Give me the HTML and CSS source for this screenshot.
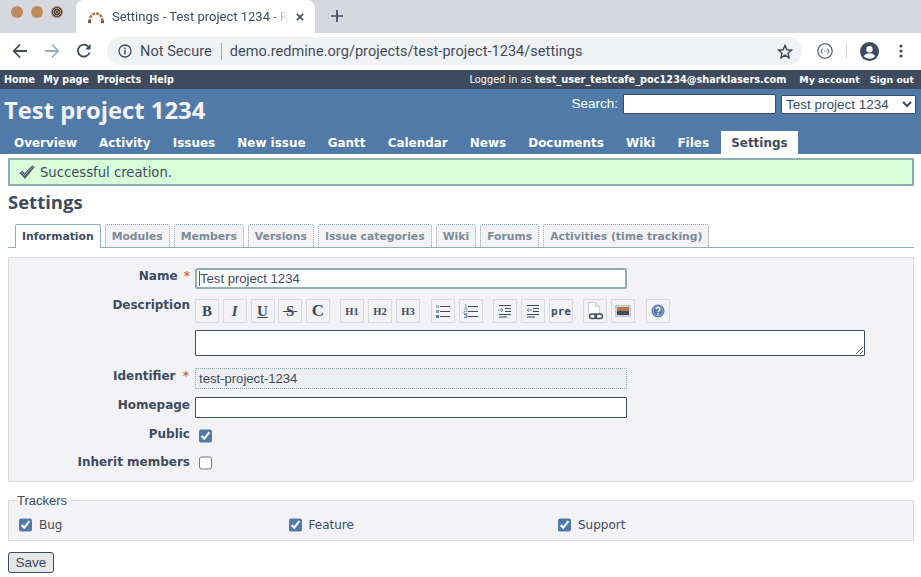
FILE: index.html
```html
<!DOCTYPE html>
<html>
<head>
<title>Settings - Test project 1234 - Redmine</title>
<link rel="stylesheet" href="styles.css">
</head>
<body>
<div class="tabstrip">
  <div class="lights">
    <span class="light"></span>
    <span class="light"></span>
    <span class="light dark"></span>
  </div>
  <div class="browser-tab">
    <svg class="favicon" width="18" height="12" viewBox="0 0 18 12">
      <path d="M2.5 11 C2.5 6 5 2.5 9 2.5 C13 2.5 15.5 6 15.5 11" fill="none" stroke="#b5794a" stroke-width="2.6" stroke-dasharray="3 1"/>
      <path d="M1 9.5h3v2.5h-3zM14 9.5h3v2.5h-3z" fill="#6b5a4e"/>
    </svg>
    <span class="browser-tab-title">Settings - Test project 1234 - R</span>
    <svg class="tab-close" width="10" height="10" viewBox="0 0 10 10"><path d="M1 1l8 8M9 1l-8 8" stroke="#3e4b5e" stroke-width="2"/></svg>
  </div>
  <svg class="new-tab" width="14" height="14" viewBox="0 0 14 14"><path d="M7 1v12M1 7h12" stroke="#3e4b5e" stroke-width="1.7"/></svg>
</div>

<div class="toolbar">
  <svg class="nav-icon" width="16" height="16" viewBox="0 0 16 16"><path d="M15 8H2M8 1.5L1.8 8 8 14.5" fill="none" stroke="#3e4b5e" stroke-width="1.8"/></svg>
  <svg class="nav-icon" width="16" height="16" viewBox="0 0 16 16"><path d="M1 8h13M8 1.5L14.2 8 8 14.5" fill="none" stroke="#94b0b4" stroke-width="1.8"/></svg>
  <svg class="nav-icon" width="16" height="16" viewBox="0 0 16 16"><path d="M13.6 9.5A6 6 0 1 1 12.4 3.6" fill="none" stroke="#3e4b5e" stroke-width="1.8"/><path d="M14.6 1v5.4H9.2z" fill="#3e4b5e"/></svg>
  <div class="omnibox">
    <svg width="14" height="14" viewBox="0 0 14 14"><circle cx="7" cy="7" r="6" fill="none" stroke="#3e4b5e" stroke-width="1.3"/><path d="M7 6v4.4M7 3.4v1.5" stroke="#3e4b5e" stroke-width="1.5"/></svg>
    <span class="not-secure">Not Secure</span>
    <span class="omni-sep"></span>
    <span class="url">demo.redmine.org/projects/test-project-1234/settings</span>
    <svg class="star" width="16" height="15" viewBox="0 0 16 15"><path d="M8 1.5l1.900 4.200 4.600.5-3.400 3.100.9 4.500L8 11.100l-4 2.700.9-4.500L1.500 6.200l4.600-.5z" fill="none" stroke="#3e4b5e" stroke-width="1.500"/></svg>
  </div>
  <svg class="ext" width="16" height="16" viewBox="0 0 16 16"><circle cx="8" cy="8" r="7.200" fill="none" stroke="#3e4b5e" stroke-width="1.100"/><path d="M5.500 5.500L4 8l1.500 2.500M10.500 5.500L12 8l-1.500 2.500" fill="none" stroke="#3e4b5e"/><path d="M7 8h.8M8.800 8h.6" stroke="#3e4b5e"/></svg>
  <span class="tool-sep"></span>
  <svg class="avatar" width="19" height="19" viewBox="0 0 19 19"><circle cx="9.500" cy="9.500" r="9.500" fill="#3e4b5e"/><circle cx="9.500" cy="7.200" r="3.200" fill="#fff"/><path d="M3.800 14.200c1.200-2.200 3.400-3 5.700-3s4.500.8 5.700 3c-1.400 1.600-3.400 2.500-5.700 2.500s-4.300-.9-5.700-2.500z" fill="#fff"/></svg>
  <svg class="dots" width="4" height="14" viewBox="0 0 4 14"><circle cx="2" cy="2" r="1.600" fill="#3e4b5e"/><circle cx="2" cy="7" r="1.600" fill="#3e4b5e"/><circle cx="2" cy="12" r="1.600" fill="#3e4b5e"/></svg>
</div>

<div class="top-menu">
  <ul class="top-links">
    <li>Home</li><li>My page</li><li>Projects</li><li>Help</li>
  </ul>
  <div class="account">Logged in as <b>test_user_testcafe_poc1234@sharklasers.com</b></div>
  <ul class="top-links right">
    <li>My account</li><li>Sign out</li>
  </ul>
</div>

<div class="header">
  <div class="header-row">
    <h1>Test project 1234</h1>
    <div class="quick-search">
      <label>Search:</label>
      <input class="search-input" type="text">
      <select class="jump"><option>Test project 1234</option></select>
    </div>
  </div>
  <ul class="main-menu">
    <li>Overview</li><li>Activity</li><li>Issues</li><li>New issue</li><li>Gantt</li><li>Calendar</li><li>News</li><li>Documents</li><li>Wiki</li><li>Files</li><li class="selected">Settings</li>
  </ul>
</div>

<div class="content">
  <div class="flash">
    <svg width="16" height="14" viewBox="0 0 16 14"><path d="M.8 8l2.600-2 2.200 2.700L13 .8l2.200 1.400L6 13.400z" fill="#4d5a6a" stroke="#3e4b5e" stroke-width=".6"/><path d="M3 7.500l2.500 3L13.500 2" fill="none" stroke="#c4cacf" stroke-width=".8"/></svg>
    <span>Successful creation.</span>
  </div>
  <h2>Settings</h2>
  <ul class="tabs">
    <li class="selected">Information</li><li>Modules</li><li>Members</li><li>Versions</li><li>Issue categories</li><li>Wiki</li><li>Forums</li><li>Activities (time tracking)</li>
  </ul>

  <div class="box">
    <div class="row row-name">
      <label>Name <i>*</i></label>
      <div class="field-wrap">
        <input class="field focused" type="text" value="Test project 1234">
        <span class="caret"></span>
      </div>
    </div>
    <div class="row row-desc">
      <label>Description</label>
      <div class="desc">
        <div class="wiki-toolbar">
          <div class="tb-group first">
            <span class="tb serif"><b>B</b></span>
            <span class="tb serif"><b><em>I</em></b></span>
            <span class="tb serif under"><b>U</b></span>
            <span class="tb serif strike"><b>&#8201;S&#8201;</b></span>
            <span class="tb serif big"><b>C</b></span>
          </div>
          <div class="tb-group">
            <span class="tb serif small"><b>H1</b></span>
            <span class="tb serif small"><b>H2</b></span>
            <span class="tb serif small"><b>H3</b></span>
          </div>
          <div class="tb-group wide">
            <span class="tb">
              <svg width="16" height="14" viewBox="0 0 16 14"><path d="M5 2.500h10M5 7.500h10M5 12.500h10" stroke="#3e4b5e"/><rect x="1" y="1" width="3" height="3" fill="#a9bcc2"/><rect x="1" y="6" width="3" height="3" fill="#8a9aa5"/><rect x="1" y="11" width="3" height="3" fill="#507aaa"/></svg>
            </span>
            <span class="tb">
              <svg width="16" height="14" viewBox="0 0 16 14"><path d="M5 2.500h10M5 7.500h10M5 12.500h10" stroke="#3e4b5e"/><path d="M2 .5h1v3.500M1 4h3" fill="none" stroke="#8fb0b0"/><path d="M1 5.500h3v2H1v2h3" fill="none" stroke="#8a9aa5" stroke-width=".9"/><path d="M1 10.500h3v3H1M2 12h2" fill="none" stroke="#507aaa" stroke-width=".9"/></svg>
            </span>
          </div>
          <div class="tb-group">
            <span class="tb">
              <svg width="14" height="14" viewBox="0 0 14 14"><path d="M1 1.500h12M7 4.500h6M7 7.500h6M1 10.500h12M1 13h8" stroke="#3e4b5e" stroke-width="1.200"/><path d="M0 6h4M3 4l2 2-2 2" fill="none" stroke="#6d9aa0"/></svg>
            </span>
            <span class="tb">
              <svg width="14" height="14" viewBox="0 0 14 14"><path d="M1 1.500h12M7 4.500h6M7 7.500h6M1 10.500h12M1 13h8" stroke="#3e4b5e" stroke-width="1.200"/><path d="M6 6H2M3 4L1 6l2 2" fill="none" stroke="#6d9aa0"/></svg>
            </span>
            <span class="tb pre">pre</span>
          </div>
          <div class="tb-group">
            <span class="tb">
              <svg width="18" height="18" viewBox="0 0 18 18"><path d="M2.500.5h7l4 4v8h-11z" fill="#fff" stroke="#c9ccd3"/><path d="M9.500.5v4h4" fill="#e2e4e8" stroke="#c9ccd3"/><rect x="3.500" y="12" width="7" height="4.500" rx="2.200" fill="none" stroke="#3e4b5e" stroke-width="1.400"/><rect x="9" y="12" width="7.500" height="4.500" rx="2.200" fill="none" stroke="#3e4b5e" stroke-width="1.400"/></svg>
            </span>
            <span class="tb">
              <svg width="16" height="12" viewBox="0 0 16 12"><rect x=".5" y=".5" width="15" height="11" fill="#cfd3d8" stroke="#a9b4bb" stroke-dasharray="1.500 1"/><rect x="2" y="2" width="12" height="4" fill="#b5794a"/><rect x="2" y="6" width="12" height="4" fill="#3e4b5e"/></svg>
            </span>
          </div>
          <div class="tb-group wide">
            <span class="tb">
              <svg width="14" height="14" viewBox="0 0 14 14"><circle cx="7" cy="7" r="6.500" fill="#507aaa"/><circle cx="7" cy="7" r="4.800" fill="none" stroke="#9db5cf"/><path d="M5 5.400c.2-1.200 1-1.700 2-1.700 1.200 0 2 .7 2 1.700 0 1.300-2 1.300-2 2.800" fill="none" stroke="#fff" stroke-width="1.300"/><rect x="6.300" y="9.300" width="1.400" height="1.400" fill="#fff"/></svg>
            </span>
          </div>
        </div>
        <textarea class="field desc-text"></textarea>
      </div>
    </div>
    <div class="row row-ident">
      <label>Identifier <i>*</i></label>
      <input class="field readonly" type="text" value="test-project-1234" readonly>
    </div>
    <div class="row row-home">
      <label>Homepage</label>
      <input class="field" type="text">
    </div>
    <div class="row row-check row-public">
      <label>Public</label>
      <input class="check" type="checkbox" checked>
    </div>
    <div class="row row-check row-inherit">
      <label>Inherit members</label>
      <input class="check" type="checkbox">
    </div>
  </div>

  <fieldset class="trackers">
    <legend>Trackers</legend>
    <label class="tracker"><input class="check" type="checkbox" checked>Bug</label>
    <label class="tracker"><input class="check" type="checkbox" checked>Feature</label>
    <label class="tracker"><input class="check" type="checkbox" checked>Support</label>
  </fieldset>

  <button class="save">Save</button>
</div>
</body>
</html>
```

FILE: styles.css
```css
* {
  box-sizing: border-box;
}

html, body {
  height: 577px;
  overflow: hidden;
}

body {
  margin: 0;
  font-family: "DejaVu Sans", sans-serif;
  color: #3e4b5e;
  background-color: #fff;
}

ul {
  list-style: none;
  margin: 0;
  padding: 0;
}

/* browser chrome */
.tabstrip {
  height: 33px;
  display: flex;
  background-color: #d6d8df;
  background-image: radial-gradient(#e3e4e9 0.7px, transparent 0.7px);
  background-size: 4px 4px;
}

.lights {
  display: flex;
  gap: 8px;
  width: 76px;
  padding: 6px 0 0 11px;
}

.light {
  width: 12px;
  height: 12px;
  border-radius: 50%;
  background-color: #bf8a5c;
}

.light.dark {
  background-color: #8a7a62;
  background-image: repeating-radial-gradient(circle, #3e4b5e 0, #3e4b5e 1px, #bf8a5c 1px, #bf8a5c 2px);
}

.browser-tab {
  width: 239px;
  height: 33px;
  display: flex;
  align-items: center;
  padding: 0 11px;
  background-color: #fff;
  border-radius: 8px 8px 0 0;
  font-family: Roboto, sans-serif;
  font-size: 13px;
}

.favicon {
  flex: none;
  margin-right: 7px;
}

.browser-tab-title {
  width: 177px;
  white-space: nowrap;
  -webkit-mask-image: linear-gradient(to right, #000 90%, transparent);
}

.tab-close {
  margin-left: 8px;
}

.new-tab {
  margin: 9px 0 0 15px;
}

.toolbar {
  height: 37px;
  display: flex;
  align-items: center;
  padding: 0 0 1px 12px;
  background-color: #fff;
}

.nav-icon {
  margin-right: 16px;
}

.nav-icon:nth-child(3) {
  margin-right: 15px;
}

.omnibox {
  width: 695px;
  height: 28px;
  display: flex;
  align-items: center;
  padding: 0 9px 0 11px;
  background-color: #f1f2f4;
  background-image: radial-gradient(#e4e5e9 0.6px, transparent 0.6px);
  background-size: 4px 4px;
  border-radius: 14px;
  font-family: Roboto, sans-serif;
  font-size: 14.5px;
  letter-spacing: 0.05px;
}

.not-secure {
  margin-left: 8px;
}

.omni-sep {
  width: 1px;
  height: 17px;
  margin: 0 8px 0 9px;
  background-color: #94b0b4;
}

.star {
  margin-left: auto;
}

.ext {
  margin-left: 15px;
}

.tool-sep {
  width: 1px;
  height: 16px;
  margin: 0 13px;
  background-color: #d6d8df;
}

.dots {
  margin-left: 20px;
}

/* redmine top bar */
.top-menu {
  height: 19px;
  display: flex;
  align-items: center;
  padding: 0 7px 0 4px;
  background-color: #3e4b5e;
  color: #fff;
  font-size: 9.6px;
}

.top-links {
  display: flex;
  gap: 8px;
  font-weight: bold;
}

.top-links.right {
  gap: 10px;
  font-size: 9.4px;
}

.account {
  margin-left: auto;
  margin-right: 13px;
  font-size: 9.75px;
}

.header {
  height: 65px;
  display: flex;
  flex-direction: column;
  justify-content: space-between;
  background-color: #507aa8;
  color: #fff;
}

.header-row {
  display: flex;
  justify-content: space-between;
  padding: 5px 5px 0 4px;
}

h1 {
  margin: 0;
  font-family: "Open Sans", sans-serif;
  font-size: 23.8px;
  line-height: 32px;
  font-weight: bold;
  color: #f3f4f6;
}

.quick-search {
  display: flex;
  align-items: flex-start;
  font-size: 13px;
}

.quick-search label {
  margin-right: 5px;
  line-height: 19px;
  font-family: "Liberation Sans", sans-serif;
  font-size: 13.5px;
}

.search-input {
  width: 153px;
  height: 20px;
  margin: 0 5px 0 0;
  border: 1px solid #3e4b5e;
  border-radius: 1px;
  background-color: #fff;
}

.jump {
  width: 135px;
  height: 19px;
  margin-top: 1px;
  padding: 0;
  border: 1px solid #3e4b5e;
  border-radius: 1px;
  background-color: #fff;
  color: #3e4b5e;
  font-family: "Liberation Sans", sans-serif;
  font-size: 13.5px;
}

.main-menu {
  display: flex;
  padding-left: 4px;
  font-size: 11.95px;
  font-weight: bold;
}

.main-menu li {
  height: 23px;
  padding: 5px 10px 0;
  margin-right: 2.2px;
}

.main-menu .selected {
  background-color: #fff;
  color: #3e4b5e;
}

/* page content */
.content {
  padding: 4px 7px 0 8px;
}

.flash {
  height: 28px;
  display: flex;
  align-items: center;
  gap: 5px;
  padding-left: 9px;
  background-color: #d8fdd8;
  border: 2px solid #8fb0b0;
  font-size: 13.2px;
}

h2 {
  margin: 4px 0 0;
  font-family: "Open Sans", sans-serif;
  font-size: 18.5px;
  line-height: 24px;
  font-weight: bold;
}

.tabs {
  display: flex;
  gap: 4px;
  height: 27px;
  margin-top: 7px;
  padding: 3px 0 0 7px;
  border-bottom: 1px solid #8fb0b0;
  font-size: 10.8px;
  font-weight: bold;
  color: #7f8a97;
}

.tabs li {
  padding: 5px 6px 0;
  background-color: #f3f3f5;
  border: 1px dotted #8fa5ad;
  border-bottom: none;
  border-radius: 2px 2px 0 0;
}

.tabs .selected {
  height: 24px;
  background-color: #fff;
  border: 1px solid #8fb0b0;
  border-bottom: none;
  color: #3e4b5e;
}

.box {
  height: 225px;
  margin-top: 9px;
  padding-top: 10px;
  background-color: #f3f3f5;
  border: 1px solid #d8dae0;
}

.row {
  display: flex;
  align-items: flex-start;
}

.row > label {
  flex: none;
  width: 181px;
  margin-right: 5px;
  text-align: right;
  font-size: 12px;
  font-weight: bold;
}

.row-ident > label {
  padding-right: 1px;
}

.row i {
  margin-left: 2px;
  color: #b5794a;
  font-style: normal;
}

.row-ident i {
  margin-left: 3px;
}

.field-wrap {
  position: relative;
}

.caret {
  position: absolute;
  left: 4px;
  top: 3px;
  width: 1px;
  height: 15px;
  background-color: #7a5a3e;
}

.field {
  display: block;
  width: 432px;
  height: 21px;
  margin: 0;
  padding: 1px 3px;
  border: 1px solid #3e4b5e;
  border-radius: 1px;
  background-color: #fff;
  color: #3e4b5e;
  font-family: "Liberation Sans", sans-serif;
  font-size: 13.1px;
}

.focused {
  border: 2px solid #8fb0b0;
  border-radius: 2px;
  padding-left: 3px;
}

.readonly {
  background-color: #eeeff1;
  border: 1px dotted #8fb0b0;
}

.row-name label,
.row-ident label,
.row-home label,
.row-inherit label {
  padding-top: 1px;
}

.row-desc {
  margin-top: 10px;
}

.row-desc > label {
  margin-top: -1px;
}

.wiki-toolbar {
  display: flex;
  gap: 10px;
}

.tb-group {
  display: flex;
  gap: 4px;
}

.tb-group.first {
  gap: 3.75px;
}

.tb-group.wide {
  margin-left: 1px;
}

.tb {
  width: 24px;
  height: 24px;
  display: flex;
  align-items: center;
  justify-content: center;
  border: 1px solid #d8dae0;
  font-size: 13px;
}

.serif {
  font-family: "Liberation Serif", serif;
  font-size: 15px;
}

.serif.big {
  font-size: 17px;
}

.serif.small {
  font-size: 10.5px;
}

.under {
  text-decoration: underline;
}

.strike b {
  text-decoration: line-through;
}

.pre {
  font-size: 11px;
  font-weight: bold;
  font-family: "DejaVu Sans Mono", monospace;
}

.desc-text {
  width: 670px;
  height: 26px;
  margin-top: 7px;
  resize: vertical;
}

.row-ident {
  margin-top: 12px;
}

.row-home {
  margin-top: 8px;
}

.row-check {
  height: 19px;
}

.row-public {
  margin-top: 9px;
}

.row-inherit {
  margin-top: 8px;
}

.check {
  width: 13px;
  height: 14px;
  margin: 0;
  accent-color: #507aa8;
}

.row .check {
  margin: 2px 0 0 4px;
}

.trackers {
  display: flex;
  height: 48px;
  margin: 11px 0 0;
  padding: 9px 9px 0 10px;
  background-color: #f3f3f5;
  border: 1px solid #d8dae0;
}

.trackers legend {
  padding: 0 3px 0 1px;
  margin-left: -3px;
  font-family: "Liberation Sans", sans-serif;
  font-size: 13px;
}

.tracker {
  width: 269.5px;
  display: flex;
  align-items: center;
  gap: 7px;
  height: 16px;
  font-size: 12px;
}

.save {
  display: block;
  width: 46px;
  height: 21px;
  margin-top: 11px;
  padding: 0;
  border: 1px solid #3e4b5e;
  border-radius: 3px;
  background-color: #e6e7ea;
  color: #3e4b5e;
  font-family: "Liberation Sans", sans-serif;
  font-size: 13.5px;
}
```
